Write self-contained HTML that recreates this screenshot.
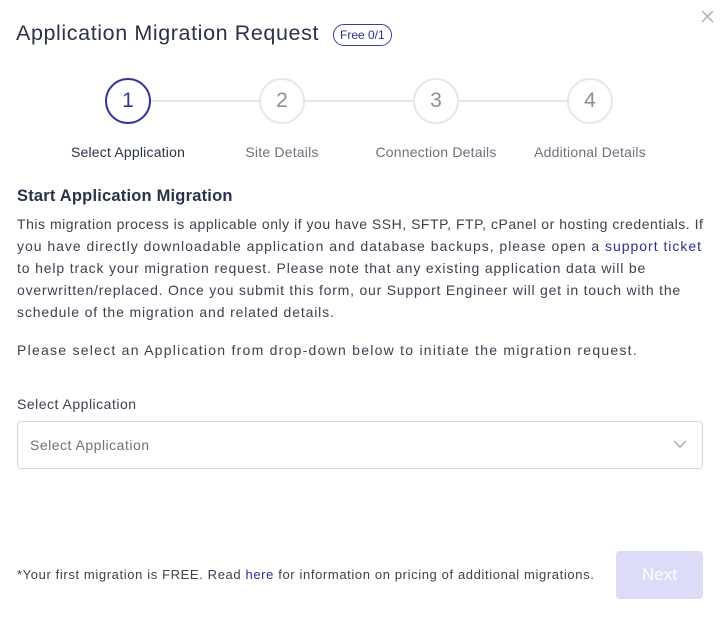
<!DOCTYPE html>
<html><head><style>
body{margin:0;width:726px;height:623px;background:#fff;font-family:"Liberation Sans",sans-serif;position:relative;overflow:hidden;color:#2d3142}
.a{position:absolute;white-space:nowrap}
.c{position:absolute;width:46px;height:46px;border:2px solid #e6e7ee;border-radius:50%;box-sizing:border-box;text-align:center;line-height:42px;font-size:21px;color:#8a8e9a;background:#fff;top:78px}
.ln{position:absolute;top:100px;height:2px;background:#e3e4e8}
.lb{position:absolute;top:144px;font-size:14px;color:#6e717c;text-align:center;width:170px;letter-spacing:0.2px}
p{margin:0}
</style></head><body>
<div class="a" style="left:16px;top:21px;font-size:21.5px;color:#2a3247;letter-spacing:0.6px">Application Migration Request</div>
<div class="a" style="left:333px;top:24px;height:22px;border:1px solid #3a3f9a;border-radius:11px;padding:0 6px;font-size:12px;line-height:20px;color:#2c3190;box-sizing:border-box">Free 0/1</div>
<svg class="a" style="left:701px;top:10px" width="13" height="13"><path d="M1 1L12 12M12 1L1 12" stroke="#a8aab2" stroke-width="1.4"/></svg>
<div class="ln" style="left:150px;width:112px"></div>
<div class="ln" style="left:304px;width:112px"></div>
<div class="ln" style="left:458px;width:112px"></div>
<div class="c" style="left:105px;border-color:#30389a;color:#30389a">1</div>
<div class="c" style="left:259px">2</div>
<div class="c" style="left:413px">3</div>
<div class="c" style="left:567px">4</div>
<div class="lb" style="left:43px;color:#2a3247">Select Application</div>
<div class="lb" style="left:197px">Site Details</div>
<div class="lb" style="left:351px">Connection Details</div>
<div class="lb" style="left:505px">Additional Details</div>
<div class="a" style="left:17px;top:187px;font-size:16.5px;font-weight:bold;color:#2a3247;letter-spacing:0.2px">Start Application Migration</div>
<div class="a" style="left:17px;top:213px;font-size:14px;line-height:22px;color:#3d4150;letter-spacing:0.52px">
<p>This migration process is applicable only if you have SSH, SFTP, FTP, cPanel or hosting credentials. If</p>
<p style="letter-spacing:0.98px">you have directly downloadable application and database backups, please open a <span style="color:#2c3190">support ticket</span></p>
<p style="letter-spacing:0.85px">to help track your migration request. Please note that any existing application data will be</p>
<p style="letter-spacing:0.78px">overwritten/replaced. Once you submit this form, our Support Engineer will get in touch with the</p>
<p style="letter-spacing:0.85px">schedule of the migration and related details.</p>
<p style="margin-top:16px;letter-spacing:1.25px">Please select an Application from drop-down below to initiate the migration request.</p>
</div>
<div class="a" style="left:17px;top:396px;font-size:14px;color:#3d4150;letter-spacing:0.5px">Select Application</div>
<div class="a" style="left:17px;top:421px;width:686px;height:48px;border:1px solid #d6d8de;border-radius:4px;box-sizing:border-box"></div>
<div class="a" style="left:30px;top:437px;font-size:14px;color:#6e717c;letter-spacing:0.5px">Select Application</div>
<svg class="a" style="left:673px;top:439px" width="14" height="10"><path d="M1 2l6 6 6-6" fill="none" stroke="#a8aab2" stroke-width="1.5"/></svg>
<div class="a" style="left:17px;top:567px;font-size:13px;color:#3d4150;letter-spacing:0.62px">*Your first migration is FREE. Read <span style="color:#2c3190">here</span> for information on pricing of additional migrations.</div>
<div class="a" style="left:616px;top:551px;width:87px;height:48px;background:#dcdcf8;border-radius:4px;color:#fff;font-size:17px;text-align:center;line-height:48px">Next</div>
</body></html>
